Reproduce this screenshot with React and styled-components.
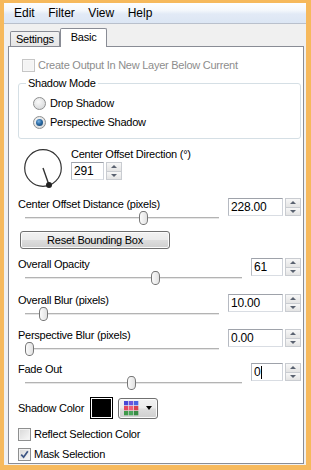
import React from 'react';
import styled, { createGlobalStyle } from 'styled-components';

const GlobalStyle = createGlobalStyle`
  html, body { margin: 0; padding: 0; background: #fff; }
  body { font-family: "Liberation Sans", Arial, sans-serif; }
`;

const Frame = styled.div`
  width: 311px;
  height: 470px;
  box-sizing: border-box;
  border-style: solid;
  border-color: #f6b95c;
  border-width: 3px 5px 5px 4px;
  background: #f0f0f0;
  display: flex;
  flex-direction: column;
  font-family: "Liberation Sans", Arial, sans-serif;
  font-size: 11px;
  letter-spacing: -0.25px;
  color: #000;
`;

const MenuBar = styled.div`
  height: 20px;
  display: flex;
  align-items: center;
  padding-left: 3px;
  background: linear-gradient(#fdfeff 0%, #f5f8fc 35%, #e2eaf6 55%, #dce6f4 100%);
  border-bottom: 1px solid #b9c0cc;
`;

const MenuItem = styled.span`
  font-size: 12px;
  letter-spacing: 0;
  padding: 0 6.5px 0 7px;
`;

const TabStrip = styled.div`
  height: 22px;
  display: flex;
  align-items: flex-end;
  padding-left: 6px;
  position: relative;
  z-index: 1;
`;

const Tab = styled.div`
  box-sizing: border-box;
  height: ${p => (p.$active ? 19 : 15)}px;
  margin-bottom: ${p => (p.$active ? -1 : 0)}px;
  padding: 0 ${p => (p.$active ? 10 : 5)}px ${p => (p.$active ? 2 : 0)}px;
  border: 1px solid #898c95;
  border-bottom: none;
  border-radius: 2px 2px 0 0;
  background: ${p => (p.$active ? '#fff' : 'linear-gradient(#f3f3f3, #e5e5e5)')};
  display: flex;
  align-items: center;
`;

const Panel = styled.div`
  flex: 1;
  margin: 0 2px 1px 4px;
  background: #fff;
  border: 1px solid #898c95;
  padding: 11px 2px 0 9px;
  display: flex;
  flex-direction: column;
`;

const CheckRow = styled.label`
  display: flex;
  align-items: center;
  gap: 3px;
  height: 14px;
  margin: ${p => p.$mt || 0}px 0 0 ${p => p.$ml || 0}px;
  color: ${p => (p.$disabled ? '#8d8d8d' : '#000')};
`;

const Box = styled.span`
  box-sizing: border-box;
  width: 13px;
  height: 13px;
  flex: none;
  border: 1px solid ${p => (p.$disabled ? '#c6c6c6' : '#8e8f8f')};
  background: ${p => (p.$disabled ? '#f4f4f4' : 'linear-gradient(135deg, #d8d8d8, #f9f9f9)')};
  box-shadow: inset 0 0 0 1px ${p => (p.$disabled ? '#f7f7f7' : '#f2f2f2')};
  display: flex;
  align-items: center;
  justify-content: center;
`;

const Group = styled.fieldset`
  margin: 4px 0 0 0;
  padding: 6px 0 9px 7px;
  border: 1px solid #d5dfe5;
  border-radius: 3px;
  min-width: 0;
`;

const Legend = styled.legend`
  padding: 0 2px;
  line-height: 14px;
`;

const RadioRow = styled.label`
  display: flex;
  align-items: center;
  gap: 4px;
  height: 14px;
  margin: ${p => p.$mt || 0}px 0 0 7px;
`;

const RadioDot = styled.span`
  box-sizing: border-box;
  width: 13px;
  height: 13px;
  flex: none;
  border-radius: 50%;
  border: 1px solid #8e8f8f;
  background: radial-gradient(circle at 40% 35%, #fafafa, #cfd1d3);
  display: flex;
  align-items: center;
  justify-content: center;
  &::after {
    content: '';
    display: ${p => (p.$on ? 'block' : 'none')};
    width: 7px;
    height: 7px;
    border-radius: 50%;
    background: radial-gradient(circle at 40% 35%, #7cb4e4 0%, #2a6aa4 45%, #123a5e 100%);
  }
`;

const DialRow = styled.div`
  display: flex;
  align-items: flex-start;
  margin-top: 8px;
`;

const DialSvg = styled.svg`
  margin-left: 4px;
  flex: none;
`;

const DialSide = styled.div`
  margin-left: 7px;
  display: flex;
  flex-direction: column;
  gap: 1px;
`;

const LabelText = styled.span`
  line-height: 14px;
  white-space: nowrap;
`;

const SpinGroup = styled.div`
  display: flex;
  gap: 2px;
  height: 18px;
`;

const Field = styled.div`
  box-sizing: border-box;
  width: ${p => p.$w}px;
  height: 18px;
  border: 1px solid;
  border-color: #9ea2aa #cfd3da #d9dde3 #b6bac2;
  background: #fff;
  padding-left: 2px;
  display: flex;
  align-items: center;
  font-size: 12px;
  letter-spacing: -0.2px;
`;

const Caret = styled.span`
  width: 1px;
  height: 13px;
  background: #000;
  margin-left: 0.5px;
`;

const SpinBox = styled.div`
  width: 16px;
  height: 18px;
  display: flex;
  flex-direction: column;
  gap: 0;
`;

const SpinHalf = styled.div`
  flex: 1;
  box-sizing: border-box;
  border: 1px solid #c9ccd1;
  border-top-width: ${p => (p.$down ? 0 : 1)}px;
  background: linear-gradient(#f7f7f7, #e4e4e4);
  display: flex;
  align-items: center;
  justify-content: center;
`;

const Arrow = styled.span`
  width: 0;
  height: 0;
  border-left: 3px solid transparent;
  border-right: 3px solid transparent;
  ${p => (p.$up ? 'border-bottom: 3px solid #5a6270;' : 'border-top: 3px solid #5a6270;')}
`;

const Param = styled.div`
  display: grid;
  grid-template-columns: 1fr auto;
  grid-template-rows: 14px 14px;
  column-gap: 9px;
  margin-top: ${p => p.$mt}px;
`;

const ParamSpin = styled.div`
  grid-column: 2;
  grid-row: 1 / 3;
  align-self: start;
  margin-top: 1px;
`;

const Track = styled.div`
  grid-column: 1;
  grid-row: 2;
  margin-left: 7px;
  position: relative;
  display: flex;
  align-items: center;
  &::before {
    content: '';
    flex: 1;
    height: 2px;
    background: linear-gradient(#b3b3b3 50%, #e6e6e6 50%);
  }
`;

const Thumb = styled.div`
  position: absolute;
  top: 0;
  width: 9px;
  height: 14px;
  box-sizing: border-box;
  border: 1px solid #767676;
  border-radius: 4px / 5px;
  background: linear-gradient(90deg, #fbfbfb, #e2e2e2);
`;

const PushButton = styled.div`
  box-sizing: border-box;
  width: ${p => p.$w}px;
  height: ${p => p.$h}px;
  margin-left: ${p => p.$ml || 0}px;
  margin-top: ${p => p.$mt || 0}px;
  border: 1px solid #707070;
  border-radius: 3px;
  background: linear-gradient(#f2f2f2 0%, #ebebeb 48%, #dddddd 52%, #cfcfcf 100%);
  box-shadow: inset 0 0 0 1px #fbfbfb;
  display: flex;
  align-items: center;
  justify-content: center;
  gap: 7px;
`;

const ColorRow = styled.div`
  display: flex;
  align-items: center;
  margin-top: 7px;
  height: 22px;
`;

const Swatch = styled.div`
  box-sizing: border-box;
  width: 23px;
  height: 22px;
  margin-left: 6px;
  border: 1px solid #000;
  padding: 1px;
  background: #fff;
  &::after {
    content: '';
    display: block;
    width: 100%;
    height: 100%;
    background: #000;
  }
`;

const DropArrow = styled.span`
  width: 0;
  height: 0;
  border-left: 3.5px solid transparent;
  border-right: 3.5px solid transparent;
  border-top: 4px solid #000;
`;

const CheckMark = () => (
  <svg width="9" height="9" viewBox="0 0 9 9">
    <path d="M1.2 4.6 L3.6 7.2 L7.8 1.2" fill="none" stroke="#3d5584" strokeWidth="1.7" />
  </svg>
);

const Spinner = ({ value, w, caret }) => (
  <SpinGroup>
    <Field $w={w}>
      {value}
      {caret && <Caret />}
    </Field>
    <SpinBox>
      <SpinHalf><Arrow $up /></SpinHalf>
      <SpinHalf $down><Arrow /></SpinHalf>
    </SpinBox>
  </SpinGroup>
);

const Slider = ({ label, value, wide, pos, mt, caret }) => (
  <Param $mt={mt}>
    <LabelText>{label}</LabelText>
    <ParamSpin>
      <Spinner value={value} w={wide ? 55 : 32} caret={caret} />
    </ParamSpin>
    <Track>
      <Thumb style={{ left: `calc(${pos * 100}% - ${pos * 9}px)` }} />
    </Track>
  </Param>
);

const gridColors = [
  ['#4848d6', '#6a55de', '#4a62e2'],
  ['#e2485e', '#ee5f78', '#d8404c'],
  ['#3f9a4a', '#4aa65a', '#388c44'],
];

const ColorGrid = () => (
  <svg width="15" height="15" viewBox="0 0 15 15">
    {gridColors.map((row, r) =>
      row.map((c, i) => <rect key={`${r}-${i}`} x={i * 5} y={r * 5} width="4.3" height="4.3" fill={c} />)
    )}
  </svg>
);

export default function App() {
  return (
    <Frame>
      <GlobalStyle />
      <MenuBar>
        <MenuItem>Edit</MenuItem>
        <MenuItem>Filter</MenuItem>
        <MenuItem>View</MenuItem>
        <MenuItem>Help</MenuItem>
      </MenuBar>
      <TabStrip>
        <Tab>Settings</Tab>
        <Tab $active>Basic</Tab>
      </TabStrip>
      <Panel>
        <CheckRow $ml={4} $disabled>
          <Box $disabled />
          Create Output In New Layer Below Current
        </CheckRow>
        <Group>
          <Legend>Shadow Mode</Legend>
          <RadioRow>
            <RadioDot />
            Drop Shadow
          </RadioRow>
          <RadioRow $mt={5}>
            <RadioDot $on />
            Perspective Shadow
          </RadioRow>
        </Group>
        <DialRow>
          <DialSvg width="42" height="42" viewBox="0 0 42 42">
            <circle cx="21" cy="21" r="18.3" fill="none" stroke="#333" strokeWidth="1.2" />
            <line x1="21" y1="21" x2="27" y2="38" stroke="#333" strokeWidth="1.4" />
            <circle cx="27" cy="38" r="3" fill="#222" />
          </DialSvg>
          <DialSide>
            <LabelText>Center Offset Direction (°)</LabelText>
            <Spinner value="291" w={33} />
          </DialSide>
        </DialRow>
        <Slider label="Center Offset Distance (pixels)" value="228.00" wide pos={0.614} mt={8} />
        <PushButton $w={150} $h={18} $ml={2} $mt={6}>Reset Bounding Box</PushButton>
        <Slider label="Overall Opacity" value="61" pos={0.608} mt={8} />
        <Slider label="Overall Blur (pixels)" value="10.00" wide pos={0.078} mt={8} />
        <Slider label="Perspective Blur (pixels)" value="0.00" wide pos={0} mt={7} />
        <Slider label="Fade Out" value="0" pos={0.49} mt={6} caret />
        <ColorRow>
          <LabelText>Shadow Color</LabelText>
          <Swatch />
          <PushButton $w={40} $h={21} $ml={5}>
            <ColorGrid />
            <DropArrow />
          </PushButton>
        </ColorRow>
        <CheckRow $mt={8}>
          <Box />
          Reflect Selection Color
        </CheckRow>
        <CheckRow $mt={6}>
          <Box>
            <CheckMark />
          </Box>
          Mask Selection
        </CheckRow>
      </Panel>
    </Frame>
  );
}
